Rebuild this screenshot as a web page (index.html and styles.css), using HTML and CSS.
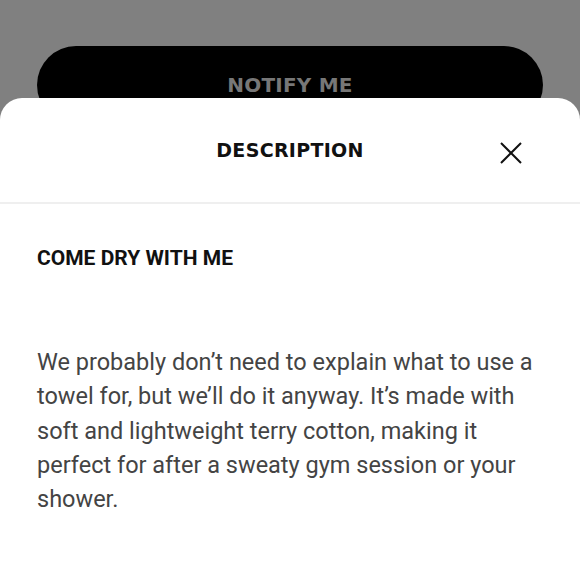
FILE: index.html
```html
<!DOCTYPE html>
<html lang="en">
<head>
    <meta charset="UTF-8">
    <title>Description</title>
    <link rel="stylesheet" href="styles.css">
</head>
<body>
<div class="screen">
    <!-- 背后的页面 -->
    <div class="backdrop">
        <button class="notify">NOTIFY ME</button>
    </div>

    <!-- 底部弹出层 -->
    <div class="sheet">
        <div class="sheet-head">
            <h2 class="sheet-title">DESCRIPTION</h2>
            <button class="close" aria-label="Close">
                <svg width="22" height="22" viewBox="0 0 22 22">
                    <path d="M1 1 L21 21 M21 1 L1 21" stroke="#111" stroke-width="2" fill="none"/>
                </svg>
            </button>
        </div>
        <div class="sheet-body">
            <h3 class="lead">COME DRY WITH ME</h3>
            <p class="text">We probably don’t need to explain what to use a towel for, but we’ll do it anyway. It’s made with soft and lightweight terry cotton, making it perfect for after a sweaty gym session or your shower.</p>
        </div>
    </div>
</div>
</body>
</html>
```

FILE: styles.css
```css
* {
    margin: 0;
    padding: 0;
    box-sizing: border-box;
}

html, body {
    height: 100%;
}

body {
    background-color: #808080;
    font-family: Roboto, "Liberation Sans", sans-serif;
}

.screen {
    display: flex;
    flex-direction: column;
    min-height: 100%;
}

/* 背后的页面 */
.backdrop {
    padding: 46px 37px 0;
}

.notify {
    display: block;
    width: 100%;
    height: 78px;
    border: none;
    border-radius: 39px;
    background-color: #000;
    color: #777;
    font: 700 20px "DejaVu Sans", sans-serif;
    letter-spacing: 0.2px;
}

/* 弹出层 */
.sheet {
    position: relative;
    flex: 1;
    margin-top: -26px;
    background-color: #fff;
    border-radius: 22px 22px 0 0;
}

.sheet-head {
    display: grid;
    grid-template-columns: 1fr auto 1fr;
    align-items: center;
    height: 106px;
    border-bottom: 2px solid #efefef;
}

.sheet-title {
    grid-column: 2;
    font: 700 19px "DejaVu Sans", sans-serif;
    color: #111;
    letter-spacing: 0.3px;
}

.close {
    justify-self: end;
    display: flex;
    align-items: center;
    justify-content: center;
    width: 40px;
    height: 40px;
    margin: 6px 49px 0 0;
    border: none;
    background: none;
}

.sheet-body {
    padding: 42px 37px 0;
}

.lead {
    font-size: 21px;
    line-height: 24px;
    font-weight: 700;
    color: #111;
}

.text {
    margin-top: 75px;
    font-size: 23.5px;
    line-height: 34.3px;
    color: #444;
}
```
